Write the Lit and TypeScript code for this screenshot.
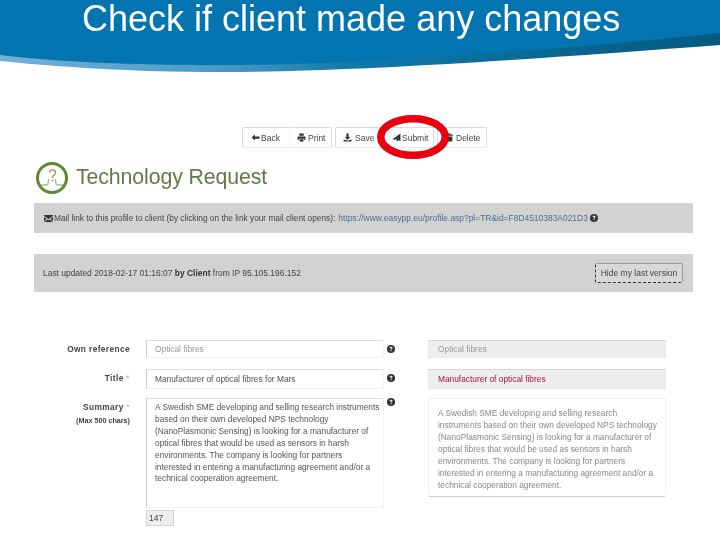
import { LitElement, html, css, svg } from "lit";
import { customElement } from "lit/decorators.js";

const help = html`<svg class="help" viewBox="0 0 16 16"><circle cx="8" cy="8" r="8" fill="#333"/><path d="M5 6.2C5 4.4 6.4 3.4 8.1 3.4S11 4.4 11 6c0 2-2.2 2-2.2 3.6H7.1C7.1 7.400 9 7.300 9 6.100 9 5.500 8.600 5.100 8 5.100S7 5.500 6.900 6.400z" fill="#fff"/><rect x="7" y="10.600" width="2" height="2" fill="#fff"/></svg>`;

const icons = {
  back: svg`<path d="M1 8l6-5.500V6h8v4H7v3.500z"/>`,
  print: svg`<path d="M4 1h8v4H4zM1 6h14v6h-2.500v-2h-9v2H1zM4.500 11h7v4h-7z"/>`,
  save: svg`<path d="M6 1h4v6h3l-5 5-5-5h3zM1 12h3l2 1.500h4L12 12h3v3H1z"/>`,
  submit: svg`<path d="M15 1v14l-3-2.500-3 2.500-1.500-4.500-3 1.500-3.500-1z"/>`,
  trash: svg`<path d="M6 1h4v1.500h4V5H2V2.500h4zM3 6h10v9H3z"/>`,
};

@customElement("app-root")
export class AppRoot extends LitElement {
  static styles = css`
    :host {
      display: block;
      position: relative;
      width: 720px;
      height: 540px;
      overflow: hidden;
      background: #fff;
      font-family: "Liberation Sans", Arial, sans-serif;
      color: #555;
      filter: blur(0.3px);
    }
    .wave {
      position: absolute;
      left: 0;
      top: 0;
      width: 720px;
      height: 80px;
    }
    .title {
      position: relative;
      margin: 0;
      height: 127px;
      padding: 0 0 0 82px;
      box-sizing: border-box;
      font-size: 36px;
      font-weight: 400;
      line-height: 37px;
      color: #fff;
    }
    .toolbar {
      position: relative;
      display: flex;
      width: max-content;
      margin-left: 242px;
      height: 21px;
      font-size: 8.500px;
      color: #444;
    }
    .btn {
      display: flex;
      align-items: center;
      box-sizing: border-box;
      border: 1px solid #dcdcdc;
      border-bottom-color: #ececec;
      margin-right: 3px;
      border-radius: 2px;
      background: #fff;
    }
    .btn.joined { margin-right: 0; border-right: 0; border-radius: 2px 0 0 2px; }
    .btn svg { width: 9px; height: 9px; fill: #333; flex: none; }
    .w1 { width: 47px; padding-left: 8px; gap: 1px; }
    .w2 { width: 43px; padding-left: 7px; gap: 2px; border-left-color: #f6f6f6; }
    .w3 { width: 46px; padding-left: 7px; gap: 3px; }
    .w4 { width: 53px; padding-left: 10px; gap: 1px; }
    .w5 { width: 50px; padding-left: 7px; gap: 2px; }
    .ring {
      position: absolute;
      left: 377px;
      top: 115px;
      width: 72px;
      height: 44px;
    }
    .brand {
      display: flex;
      align-items: center;
      gap: 8px;
      margin: 13px 0 0 36px;
      height: 33px;
    }
    .brand svg { width: 32px; height: 32px; }
    .brand span {
      font-size: 21.300px;
      color: #5f7d48;
      letter-spacing: -0.100px;
    }
    .bar {
      display: flex;
      align-items: center;
      justify-content: space-between;
      box-sizing: border-box;
      width: 659px;
      margin-left: 34px;
      background: #d2d2d2;
      font-size: 8.450px;
      color: #444;
      white-space: nowrap;
    }
    .mail { height: 30px; margin-top: 9px; padding-left: 10px; justify-content: flex-start; }
    .mail span { font-size: 8.300px; }
    .mail svg.env { width: 9px; height: 7px; margin-right: 1px; fill: #333; }
    .mail a { margin-left: 3px; color: #48709a; text-decoration: none; }
    .mail .help { margin-left: 2px; width: 8px; height: 8px; }
    .updated { height: 38px; margin-top: 21px; padding: 0 10px 0 9px; }
    .updated b { color: #333; }
    .hide {
      box-sizing: border-box;
      width: 88px;
      height: 20px;
      border: 1px dashed #333;
      border-top: 1px solid #999;
      border-right: 1px solid #999;
      border-radius: 2px;
      background: #d8d8d8;
      display: flex;
      align-items: center;
      justify-content: center;
      font-size: 8.500px;
      color: #444;
    }
    .form {
      display: grid;
      grid-template-columns: 96px 254px 44px 238px;
      margin: 48px 0 0 34px;
      align-items: start;
      font-size: 8.350px;
    }
    .label {
      grid-column: 1;
      text-align: right;
      font-weight: 700;
      font-size: 8.300px;
      letter-spacing: 0.400px;
      color: #444;
      line-height: 19px;
    }
    .label small {
      display: block;
      font-size: 7.200px;
      letter-spacing: 0;
      line-height: 10px;
      margin-top: -1px;
    }
    .label .s { color: #aaa; font-weight: 400; }
    .field {
      box-sizing: border-box;
      margin-left: 16px;
      width: 238px;
      padding: 0 8px;
      border: 1px solid #f2f2f2;
      border-left-color: #ccc;
      border-top-color: #ddd;
      background: #fff;
      color: #555;
    }
    .field.faint { color: #999; height: 18px; line-height: 17px; }
    .field.h20 { height: 20px; line-height: 19px; }
    .hcell { grid-column: 3; display: flex; padding: 5px 0 0 3px; }
    .hcell.top { padding-top: 0; }
    .help { width: 8px; height: 8px; flex: none; }
    .rf {
      grid-column: 4;
      box-sizing: border-box;
      padding: 0 9px;
      background: #eee;
      border: 1px solid #e8e8e8;
      border-top-color: #d4d4d4;
      color: #999;
    }
    .rf.one { height: 18px; line-height: 17px; }
    .rf.red { height: 20px; line-height: 19px; color: #a81530; }
    .row-gap { grid-column: 1 / -1; }
    .g1 { height: 10px; }
    .g2 { height: 9px; }
    .sum {
      height: 110px;
      padding: 3px 3px 0 8px;
      line-height: 11.900px;
    }
    .sumcol { grid-column: 2; }
    .count {
      box-sizing: border-box;
      width: 28px;
      height: 16px;
      margin: 2px 0 0 16px;
      border: 1px solid #d4d4d4;
      background: #eee;
      padding-left: 2px;
      font-size: 8.500px;
      line-height: 15px;
      color: #444;
    }
    .rs {
      grid-column: 4;
      box-sizing: border-box;
      height: 99px;
      padding: 8px 6px 0 9px;
      line-height: 12px;
      background: #fff;
      border: 1px solid #f0f0f0;
      border-bottom: 1px solid #ccc;
      color: #888;
      border-radius: 2px;
    }
  `;

  render() {
    return html`
      <svg class="wave" viewBox="0 0 720 80">
        <defs>
          <linearGradient id="edge" x1="0" x2="1" y1="0" y2="0">
            <stop offset="0" stop-color="#74b0d8" />
            <stop offset="0.3" stop-color="#4a9ac8" />
            <stop offset="0.5" stop-color="#0d78a8" />
            <stop offset="1" stop-color="#05597f" />
          </linearGradient>
        </defs>
        <path d="M0 61C60 67 130 72 220 72C360 72 560 57 720 45V30H0Z" fill="url(#edge)" />
        <path d="M0 0H720V33C560 50 360 65 220 65C130 65 60 62 0 55Z" fill="#0274b0" />
      </svg>
      <h1 class="title">Check if client made any changes</h1>

      <div class="toolbar">
        <div class="btn joined w1"><svg viewBox="0 0 16 16">${icons.back}</svg>Back</div>
        <div class="btn w2"><svg viewBox="0 0 16 16">${icons.print}</svg>Print</div>
        <div class="btn joined w3"><svg viewBox="0 0 16 16">${icons.save}</svg>Save</div>
        <div class="btn w4"><svg viewBox="0 0 16 16">${icons.submit}</svg>Submit</div>
        <div class="btn w5"><svg viewBox="0 0 16 16">${icons.trash}</svg>Delete</div>
      </div>

      <div class="brand">
        <svg viewBox="0 0 32 32">
          <circle cx="16" cy="16" r="14.500" fill="#fff" stroke="#5c8a30" stroke-width="3" />
          <path d="M3 23H11C12.500 23 12 18 13 17M19 17C20 18 19.500 23 21 23H29" fill="none" stroke="#7d9a5a" stroke-width="1" />
          <path d="M13.500 10.500C13.500 7 19.500 7 19.500 10.500C19.500 13 16.500 13 16.500 16" fill="none" stroke="#a08c50" stroke-width="1.200" />
          <circle cx="16.500" cy="18.500" r="0.900" fill="#a08c50" />
        </svg>
        <span>Technology Request</span>
      </div>

      <div class="bar mail">
        <svg class="env" viewBox="0 0 18 14"><path d="M0 0H18V2L9 8 0 2ZM0 4L5.500 8 0 12ZM18 4V12L12.500 8ZM7 9.200L9 10.500 11 9.200 18 14H0Z" /></svg>
        <span>Mail link to this profile to client (by clicking on the link your mail client opens):</span>
        <a href="#">https://www.easypp.eu/profile.asp?pl=TR&amp;id=F8D4510383A021D3</a>
        ${help}
      </div>

      <div class="bar updated">
        <span>Last updated 2018-02-17 01:16:07 <b>by Client</b> from IP 95.105.196.152</span>
        <div class="hide">Hide my last version</div>
      </div>

      <div class="form">
        <div class="label">Own reference</div>
        <div class="field faint">Optical fibres</div>
        <div class="hcell">${help}</div>
        <div class="rf one">Optical fibres</div>
        <div class="row-gap g1"></div>

        <div class="label">Title <span class="s">*</span></div>
        <div class="field h20">Manufacturer of optical fibres for Mars</div>
        <div class="hcell">${help}</div>
        <div class="rf red">Manufacturer of optical fibres</div>
        <div class="row-gap g2"></div>

        <div class="label">Summary <span class="s">*</span><small>(Max 500 chars)</small></div>
        <div class="sumcol">
          <div class="field sum">A Swedish SME developing and selling research instruments based on their own developed NPS technology (NanoPlasmonic Sensing) is looking for a manufacturer of optical fibres that would be used as sensors in harsh environments. The company is looking for partners interested in entering a manufacturing agreement and/or a technical cooperation agreement.</div>
          <div class="count">147</div>
        </div>
        <div class="hcell top">${help}</div>
        <div class="rs">A Swedish SME developing and selling research<br />instruments based on their own developed NPS technology (NanoPlasmonic Sensing) is looking for a manufacturer of optical fibres that would be used as sensors in harsh environments. The company is looking for partners interested in entering a manufacturing agreement and/or a technical cooperation agreement.</div>
      </div>

      <svg class="ring" viewBox="0 0 72 44">
        <ellipse cx="36" cy="22" rx="32.250" ry="18.250" fill="none" stroke="#e8000e" stroke-width="7.500" />
      </svg>
    `;
  }
}
